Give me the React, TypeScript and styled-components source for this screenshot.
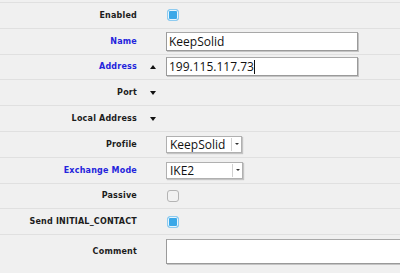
import * as React from 'react';
import styled, { createGlobalStyle } from 'styled-components';

const GlobalStyle = createGlobalStyle`
  html, body {
    margin: 0;
    padding: 0;
    background: #f0f0f0;
    overflow: hidden;
  }
`;

export const Form = styled.div`
  width: 400px;
  height: 273px;
  padding-top: 2px;
  box-sizing: border-box;
  background: #f0f0f0;
  font-family: 'DejaVu Sans', Verdana, sans-serif;
`;

export const Row = styled.div<{ $tall?: boolean }>`
  display: flex;
  align-items: center;
  height: ${(p) => (p.$tall ? 33 : 25.8)}px;
  box-sizing: border-box;
  border-top: 1px solid #e0e0e0;
`;

export const Label = styled.div<{ $required?: boolean }>`
  width: 137px;
  flex: none;
  text-align: right;
  font-size: 8px;
  font-weight: bold;
  letter-spacing: 0.2px;
  color: ${(p) => (p.$required ? '#2424dc' : '#1c1c1c')};
`;

export const Toggle = styled.div`
  width: 29px;
  flex: none;
  display: flex;
  justify-content: center;
  padding-left: 2px;
  box-sizing: border-box;
`;

export const Arrow = styled.div<{ $up?: boolean }>`
  width: 0;
  height: 0;
  border-left: 3.5px solid transparent;
  border-right: 3.5px solid transparent;
  ${(p) =>
    p.$up ? 'border-bottom: 4px solid #111;' : 'border-top: 4px solid #111;'}
`;

export const Value = styled.div`
  flex: 1;
  display: flex;
  align-items: center;
`;

export const Check = styled.div<{ $checked?: boolean }>`
  width: 12px;
  height: 12px;
  box-sizing: border-box;
  margin-left: 1px;
  border-radius: 3px;
  border: 1px solid ${(p) => (p.$checked ? '#8ecbf0' : '#b4b4b4')};
  background: ${(p) => (p.$checked ? '#3aa8e8' : '#f2f2f2')};
  box-shadow: ${(p) => (p.$checked ? 'inset 0 0 0 1px #e6f4fc' : 'none')};
`;

export const TextInput = styled.div<{ $width: number; $height?: number }>`
  width: ${(p) => p.$width}px;
  height: ${(p) => p.$height ?? 19}px;
  box-sizing: border-box;
  background: #fff;
  border: 1px solid #9a9a9a;
  border-top-color: #a8a8a8;
  box-shadow: 1px 1px 0 #c4c4c4;
  padding: 0 2px;
  display: flex;
  align-items: center;
  font-family: 'Open Sans', 'Noto Sans', sans-serif;
  font-size: 12px;
  color: #111;
`;

export const Caret = styled.span`
  display: inline-block;
  width: 1px;
  height: 14px;
  background: #111;
`;

export const Select = styled.div<{ $width: number }>`
  width: ${(p) => p.$width}px;
  height: 17px;
  box-sizing: border-box;
  background: #fff;
  border: 1px solid #b0b0b0;
  box-shadow: 1px 1px 1px #c4c4c4;
  display: flex;
  align-items: center;
  font-family: 'Open Sans', 'Noto Sans', sans-serif;
  font-size: 12px;
  color: #111;
`;

export const SelectText = styled.span`
  flex: 1;
  padding-left: 3px;
`;

export const SelectButton = styled.span`
  width: 9px;
  height: 13px;
  border-left: 1px solid #d0d0d0;
  display: flex;
  align-items: center;
  justify-content: center;
  &::after {
    content: '';
    border-left: 2px solid transparent;
    border-right: 2px solid transparent;
    border-top: 2px solid #333;
  }
`;

type Field = {
  label: string;
  required?: boolean;
  arrow?: 'up' | 'down';
  tall?: boolean;
  control?: React.ReactNode;
};

const fields: Field[] = [
  { label: 'Enabled', control: <Check $checked /> },
  {
    label: 'Name',
    required: true,
    control: <TextInput $width={192}>KeepSolid</TextInput>,
  },
  {
    label: 'Address',
    required: true,
    arrow: 'up',
    control: (
      <TextInput $width={192}>
        199.115.117.73
        <Caret />
      </TextInput>
    ),
  },
  { label: 'Port', arrow: 'down' },
  { label: 'Local Address', arrow: 'down' },
  {
    label: 'Profile',
    control: (
      <Select $width={76}>
        <SelectText>KeepSolid</SelectText>
        <SelectButton />
      </Select>
    ),
  },
  {
    label: 'Exchange Mode',
    required: true,
    control: (
      <Select $width={77}>
        <SelectText>IKE2</SelectText>
        <SelectButton />
      </Select>
    ),
  },
  { label: 'Passive', control: <Check /> },
  { label: 'Send INITIAL_CONTACT', control: <Check $checked /> },
  {
    label: 'Comment',
    tall: true,
    control: <TextInput $width={250} $height={25} />,
  },
];

export default function App() {
  return (
    <>
      <GlobalStyle />
      <Form>
        {fields.map((f) => (
          <Row key={f.label} $tall={f.tall}>
            <Label $required={f.required}>{f.label}</Label>
            <Toggle>{f.arrow && <Arrow $up={f.arrow === 'up'} />}</Toggle>
            <Value>{f.control}</Value>
          </Row>
        ))}
      </Form>
    </>
  );
}
